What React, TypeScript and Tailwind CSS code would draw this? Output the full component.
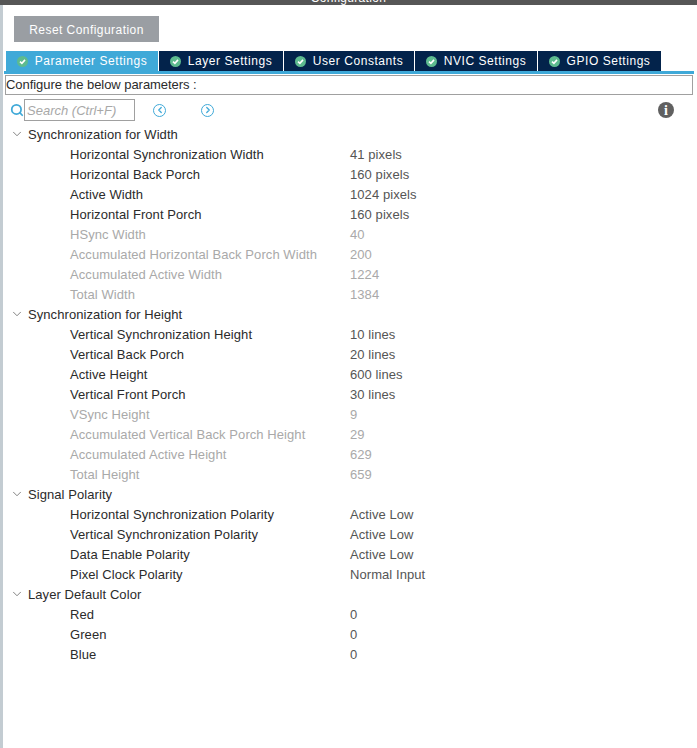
import { ChevronDown, ChevronLeft, ChevronRight, Search } from "lucide-react";

type Row = { label: string; value: string; off?: boolean };
type Group = { title: string; rows: Row[] };

const tabs = ["Parameter Settings", "Layer Settings", "User Constants", "NVIC Settings", "GPIO Settings"];
const tabWidths = ["w-[153px]", "w-[125px]", "w-[131px]", "w-[123px]", "w-[124px]"];

const groups: Group[] = [
  {
    title: "Synchronization for Width",
    rows: [
      { label: "Horizontal Synchronization Width", value: "41 pixels" },
      { label: "Horizontal Back Porch", value: "160 pixels" },
      { label: "Active Width", value: "1024 pixels" },
      { label: "Horizontal Front Porch", value: "160 pixels" },
      { label: "HSync Width", value: "40", off: true },
      { label: "Accumulated Horizontal Back Porch Width", value: "200", off: true },
      { label: "Accumulated Active Width", value: "1224", off: true },
      { label: "Total Width", value: "1384", off: true },
    ],
  },
  {
    title: "Synchronization for Height",
    rows: [
      { label: "Vertical Synchronization Height", value: "10 lines" },
      { label: "Vertical Back Porch", value: "20 lines" },
      { label: "Active Height", value: "600 lines" },
      { label: "Vertical Front Porch", value: "30 lines" },
      { label: "VSync Height", value: "9", off: true },
      { label: "Accumulated Vertical Back Porch Height", value: "29", off: true },
      { label: "Accumulated Active Height", value: "629", off: true },
      { label: "Total Height", value: "659", off: true },
    ],
  },
  {
    title: "Signal Polarity",
    rows: [
      { label: "Horizontal Synchronization Polarity", value: "Active Low" },
      { label: "Vertical Synchronization Polarity", value: "Active Low" },
      { label: "Data Enable Polarity", value: "Active Low" },
      { label: "Pixel Clock Polarity", value: "Normal Input" },
    ],
  },
  {
    title: "Layer Default Color",
    rows: [
      { label: "Red", value: "0" },
      { label: "Green", value: "0" },
      { label: "Blue", value: "0" },
    ],
  },
];

function NavButton({ right }: { right?: boolean }) {
  return (
    <span className="flex h-[13px] w-[13px] items-center justify-center rounded-full border border-[#3fa9d8] text-[#3fa9d8]">
      {right ? <ChevronRight size={10} strokeWidth={3} /> : <ChevronLeft size={10} strokeWidth={3} />}
    </span>
  );
}

function TabCheck() {
  return (
    <svg width="11" height="11" viewBox="0 0 11 11" className="shrink-0">
      <circle cx="5.5" cy="5.5" r="5.5" fill="#5dbb8f" />
      <path d="M3 5.6 L4.9 7.4 L8 3.9" fill="none" stroke="#ffffff" strokeWidth="1.6" />
    </svg>
  );
}

export default function App() {
  return (
    <div className="flex h-[748px] w-[697px] flex-col overflow-hidden bg-white font-['Liberation_Sans',sans-serif] text-[13px] tracking-[0.07px] text-[#2b2b2b]">
      <div className="flex h-[5px] shrink-0 justify-center overflow-hidden bg-[#565656]">
        <span className="-mt-[9px] text-[12px] leading-[14px] tracking-[0.3px] text-white">Configuration</span>
      </div>
      <div className="flex min-h-0 flex-1">
        <div className="w-[3px] shrink-0 bg-[#c3ccd2]" />
        <div className="flex min-w-0 flex-1 flex-col pl-[1px]">
          <button className="mt-[11px] ml-[10px] h-[26px] w-[145px] bg-[#9a9ea3] pt-[1px] text-center text-[12px] tracking-[0.45px] text-white">
            Reset Configuration
          </button>
          <div className="mt-[9px] ml-[2px] flex h-[20px]">
            {tabs.map((tab, i) => (
              <div
                key={tab}
                className={`flex items-center justify-center gap-[7px] border-r border-white text-[12px] tracking-[0.55px] text-white ${tabWidths[i]} ${i === 0 ? "bg-[#3fa9d8]" : "bg-[#03234b]"}`}
              >
                <TabCheck />
                {tab}
              </div>
            ))}
          </div>
          <div className="mr-[3px] h-[3px] bg-[#3fa9d8]" />
          <div className="mt-[1px] mr-[4px] ml-[1px] flex h-[20px] items-center border border-[#a0a0a0] tracking-[-0.05px]">
            Configure the below parameters :
          </div>
          <div className="mt-[4px] flex h-[22px] items-center pr-[23px]">
            <Search size={14} strokeWidth={3} className="ml-[6px] text-[#3fa9d8]" />
            <div className="flex h-[22px] w-[111px] items-center border border-[#a0a0a0] pt-[1px] pl-[2px] italic tracking-normal text-[#a8a8a8]">
              Search (Ctrl+F)
            </div>
            <div className="ml-[18px]">
              <NavButton />
            </div>
            <div className="ml-[35px]">
              <NavButton right />
            </div>
            <span className="ml-auto flex h-[16px] w-[16px] items-center justify-center rounded-full bg-[#606060] font-['Liberation_Serif',serif] text-[14px] font-bold text-white">
              i
            </span>
          </div>
          <div className="mt-[3px]">
            {groups.map((g) => (
              <div key={g.title}>
                <div className="flex h-[20px] items-center">
                  <ChevronDown size={14} strokeWidth={1.25} className="ml-[6px] text-[#555]" />
                  <span className="ml-[4px] pt-[1px]">{g.title}</span>
                </div>
                {g.rows.map((r) => (
                  <div key={r.label} className={`flex h-[20px] items-center pt-[1px] pl-[66px] ${r.off ? "text-[#a9a9a9]" : ""}`}>
                    <span className="w-[280px] shrink-0">{r.label}</span>
                    <span className={r.off ? "" : "text-[#555]"}>{r.value}</span>
                  </div>
                ))}
              </div>
            ))}
          </div>
        </div>
      </div>
    </div>
  );
}
